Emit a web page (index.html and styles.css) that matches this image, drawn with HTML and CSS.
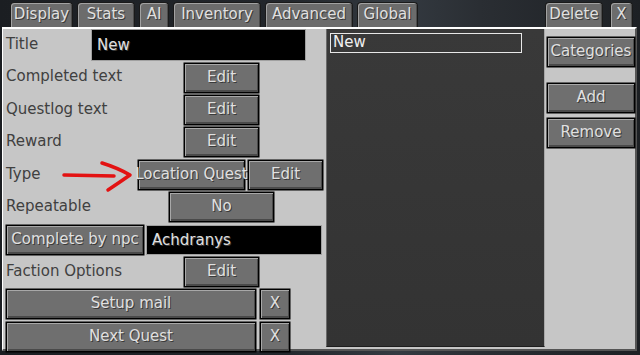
FILE: index.html
```html
<!DOCTYPE html>
<html lang="en">
<head>
    <meta charset="UTF-8">
    <meta name="viewport" content="width=device-width, initial-scale=1.0">
    <title>Quest editor</title>
    <link rel="stylesheet" href="styles.css">
</head>
<body>
    <div class="screen">
        <div class="tabs">
            <span class="tab t-display">Display</span>
            <span class="tab t-stats">Stats</span>
            <span class="tab t-ai">AI</span>
            <span class="tab t-wide">Inventory</span>
            <span class="tab t-wide">Advanced</span>
            <span class="tab t-global">Global</span>
            <span class="tab t-delete push">Delete</span>
            <span class="tab t-close">X</span>
        </div>
        <div class="panel">
            <div class="form">
                <div class="row">
                    <span class="label w-title">Title</span>
                    <div class="field f-title">New</div>
                </div>
                <div class="row">
                    <span class="label w-edit">Completed text</span>
                    <span class="btn b-edit">Edit</span>
                </div>
                <div class="row">
                    <span class="label w-edit">Questlog text</span>
                    <span class="btn b-edit">Edit</span>
                </div>
                <div class="row">
                    <span class="label w-edit">Reward</span>
                    <span class="btn b-edit">Edit</span>
                </div>
                <div class="row">
                    <span class="label w-type">Type</span>
                    <span class="btn b-type">Location Quest</span>
                    <span class="btn b-edit">Edit</span>
                </div>
                <div class="row">
                    <span class="label w-repeat">Repeatable</span>
                    <span class="btn b-no">No</span>
                </div>
                <div class="row">
                    <span class="btn b-npc">Complete by npc</span>
                    <div class="field f-npc">Achdranys</div>
                </div>
                <div class="row">
                    <span class="label w-edit">Faction Options</span>
                    <span class="btn b-edit">Edit</span>
                </div>
                <div class="row">
                    <span class="btn b-wide">Setup mail</span>
                    <span class="btn b-x">X</span>
                </div>
                <div class="row">
                    <span class="btn b-wide">Next Quest</span>
                    <span class="btn b-x">X</span>
                </div>
            </div>
            <div class="list">
                <div class="item">New</div>
            </div>
            <div class="side">
                <span class="btn b-side">Categories</span>
                <span class="btn b-side add">Add</span>
                <span class="btn b-side">Remove</span>
            </div>
        </div>
        <!-- hand drawn arrow on top of the screenshot -->
        <svg class="arrow" width="80" height="40" viewBox="0 0 80 40">
            <path d="M4 19 L54 20" />
            <path d="M42 7 Q58 12 70 19 Q60 26 48 34" />
        </svg>
    </div>
</body>
</html>
```

FILE: styles.css
```css
html, body{
    margin: 0;
    padding: 0;
}
body{
    width: 640px;
    height: 355px;
    overflow: hidden;
    background: #202327;
    font-family: "DejaVu Sans", sans-serif;
    font-size: 15px;
}
.screen{
    position: relative;
    width: 640px;
    height: 355px;
    background: linear-gradient(90deg, #1b1e22 0%, #23272c 45%, #343a41 62%, #2a2e33 75%, #1d2024 100%);
}
.tabs{
    display: flex;
    gap: 4px;
    height: 27px;
    padding: 0 7px 0 10px;
    box-sizing: border-box;
    align-items: flex-end;
}
.tab{
    height: 25px;
    box-sizing: border-box;
    padding-bottom: 3px;
    display: flex;
    align-items: center;
    justify-content: center;
    white-space: nowrap;
    background: #6c6c6c;
    border: 1px solid #1a1a1a;
    border-bottom: none;
    border-radius: 4px 4px 0 0;
    box-shadow: inset 1px 1px 0 #a2a2a2, inset -1px 0 0 #4c4c4c;
    color: #e0e0e0;
    text-shadow: 1px 1px 0 #383838;
}
.t-display{ width: 63px; }
.t-stats{ width: 58px; }
.t-ai{ width: 30px; }
.t-wide{ width: 88px; }
.t-global{ width: 61px; }
.t-delete{ width: 58px; }
.t-close{ width: 23px; margin-left: 3px; }
.tabs .push{
    margin-left: auto;
}
.panel{
    display: flex;
    width: 635px;
    height: 324px;
    margin-left: 2px;
    box-sizing: border-box;
    background: #c6c6c6;
    border-top: 2px solid #fff;
    border-left: 1px solid #fff;
    border-right: 2px solid #555;
    border-bottom: 2px solid #555;
}
.form{
    width: 323px;
    padding-left: 3px;
    box-sizing: border-box;
    display: grid;
    grid-auto-rows: 32.4px;
    align-content: start;
}
.row{
    display: flex;
    align-items: center;
}
.label{
    color: #404040;
    white-space: nowrap;
    align-self: flex-start;
    margin-top: 6px;
}
.w-title{ width: 85px; }
.w-edit{ width: 178px; }
.w-type{ width: 132px; }
.w-repeat{ width: 163px; }

.btn{
    height: 30px;
    box-sizing: border-box;
    display: flex;
    align-items: center;
    justify-content: center;
    padding-bottom: 2px;
    white-space: nowrap;
    background: #6f6f6f;
    border: 1px solid #000;
    box-shadow: inset 1px 1px 0 #a8a8a8, inset -1px -2px 0 #4a4a4a, 0 0 0 0.5px #000;
    color: #e0e0e0;
    text-shadow: 1px 1px 0 #3a3a3a;
}
.b-edit{ width: 75px; }
.b-type{ width: 107px; margin-right: 3px; }
.b-no{ width: 105px; }
.b-npc{ width: 138px; margin-right: 2px; }
.b-wide{ width: 250px; margin-right: 4px; }
.b-x{ width: 30px; }
.b-side{ width: 88px; }

.field{
    box-sizing: border-box;
    background: #000;
    border: 1px solid #a0a0a0;
    color: #e0e0e0;
    text-shadow: 1px 1px 0 #383838;
    display: flex;
    align-items: center;
    padding-left: 5px;
}
.f-title{
    width: 215px;
    height: 32px;
}
.f-npc{
    width: 176px;
    height: 30px;
}
.list{
    width: 219px;
    margin-bottom: 2px;
    box-sizing: border-box;
    background: linear-gradient(#393939, #333);
    border-left: 1px solid #6a6a6a;
    border-right: 1px solid #a8a8a8;
    border-bottom: 1px solid #1e1e1e;
    padding: 4px 0 0 3px;
}
.item{
    width: 192px;
    height: 20px;
    box-sizing: border-box;
    border: 1px solid #e8e8e8;
    color: #f0f0f0;
    padding-left: 2px;
    line-height: 17px;
}
.side{
    width: 90px;
    padding: 8px 0 0 2px;
    box-sizing: border-box;
    display: flex;
    flex-direction: column;
    gap: 5px;
}
.side .add{
    margin-top: 11px;
}
.arrow{
    position: absolute;
    left: 60px;
    top: 156px;
    fill: none;
    stroke: #e31212;
    stroke-width: 3.5;
    stroke-linecap: round;
    stroke-linejoin: round;
}
```
